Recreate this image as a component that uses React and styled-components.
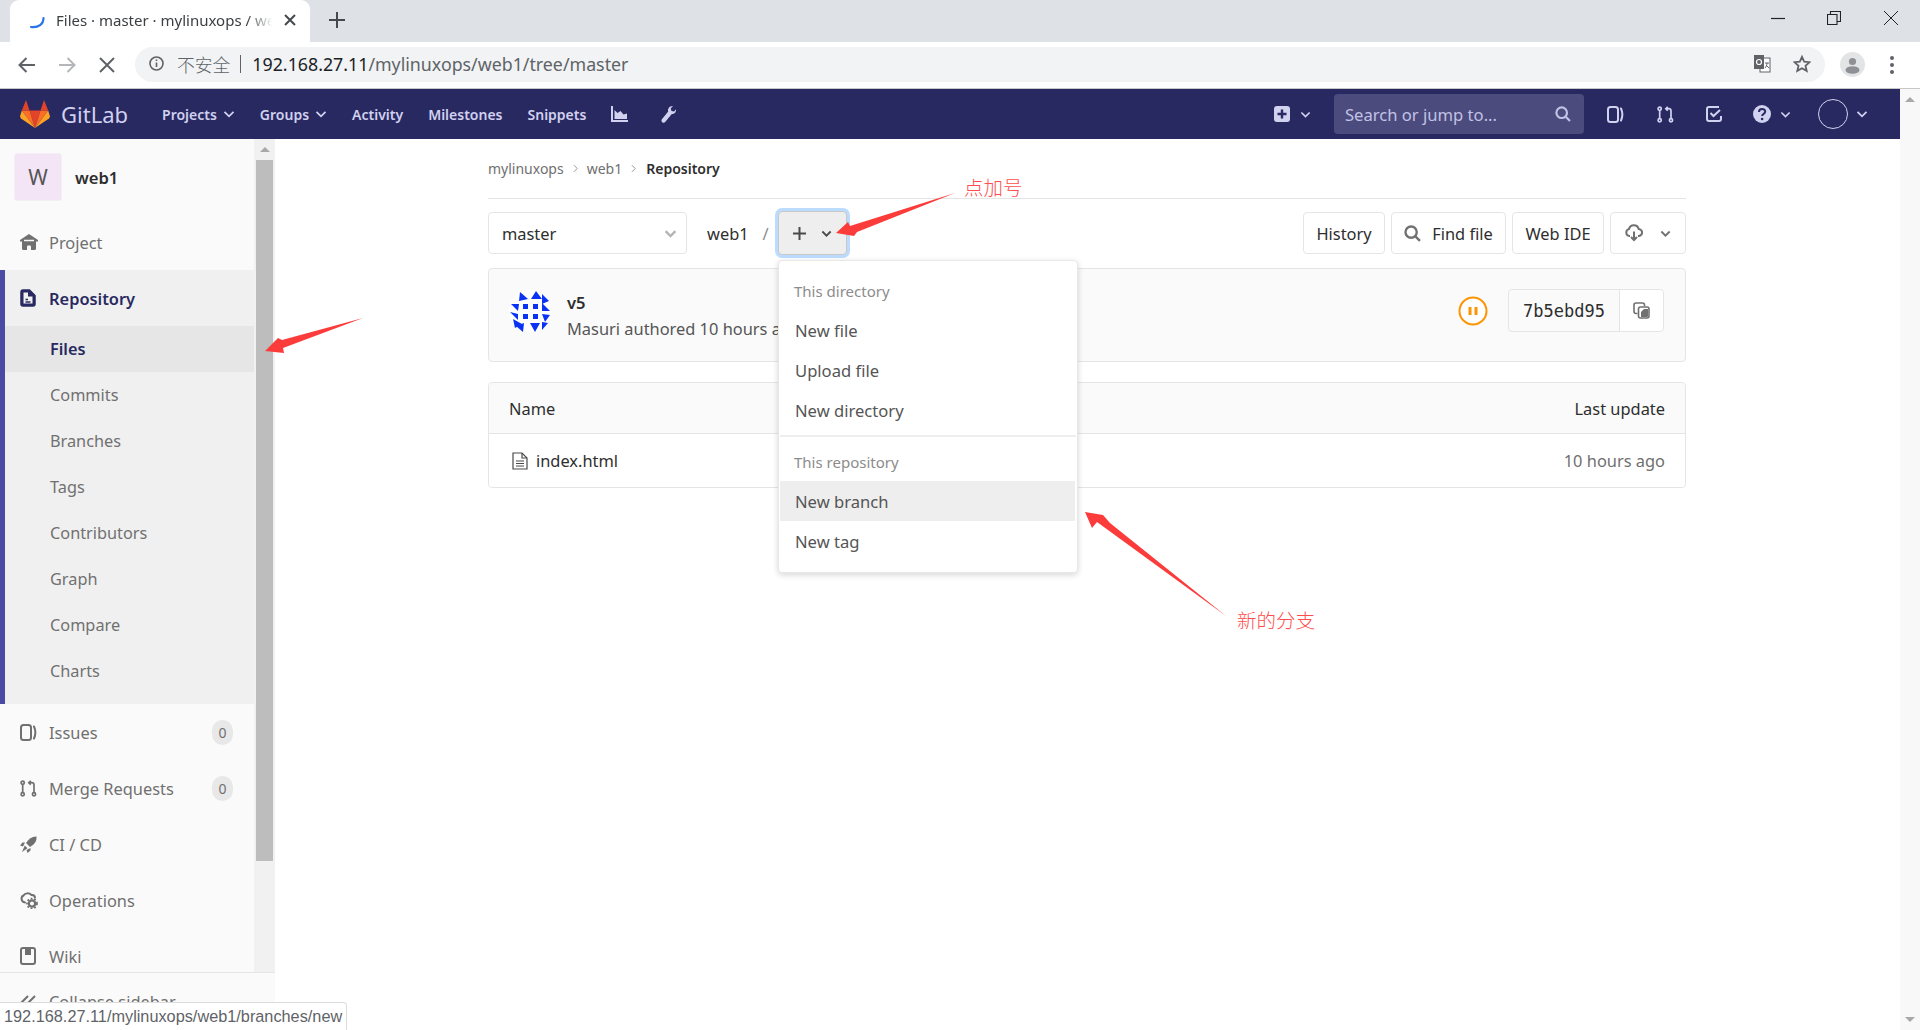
import React from 'react';
import styled, { createGlobalStyle } from 'styled-components';

const FONT = `"Noto Sans", "Noto Sans CJK SC", sans-serif`;

//GLOBAL
const GlobalStyle = createGlobalStyle`
    html, body { margin: 0; padding: 0; background: #fff; overflow: hidden; }
    body { font-family: ${FONT}; font-size: 16px; color: #2e2e2e; }
    * { box-sizing: border-box; }
`
const Page = styled.div`
    position: relative;
    width: 1920px;
    height: 1030px;
    overflow: hidden;
    display: flex;
    flex-direction: column;
`

//BROWSER CHROME
const TabStrip = styled.div`
    height: 42px;
    flex: none;
    background: #dee1e6;
    display: flex;
    align-items: flex-end;
    padding-left: 10px;
`
const Tab = styled.div`
    width: 300px;
    height: 42px;
    background: #fff;
    border-radius: 9px 9px 0 0;
    display: flex;
    align-items: center;
    padding: 0 14px 2px 19px;
    gap: 11px;
`
const TabTitle = styled.span`
    flex: 1;
    font-size: 15px;
    color: #3c4043;
    white-space: nowrap;
    overflow: hidden;
    -webkit-mask-image: linear-gradient(90deg, #000 88%, transparent 100%);
    mask-image: linear-gradient(90deg, #000 88%, transparent 100%);
`
const NewTab = styled.div`
    margin-left: 19px;
    height: 42px;
    display: flex;
    align-items: center;
    padding-bottom: 2px;
    color: #45494d;
`
const WindowButtons = styled.div`
    margin-left: auto;
    height: 42px;
    display: flex;
    align-items: center;
    padding: 0 21px 6px 0;
    gap: 42px;
    color: #222;
`
const Toolbar = styled.div`
    height: 47px;
    flex: none;
    background: #fff;
    border-bottom: 1px solid #c8c8c8;
    display: flex;
    align-items: center;
    padding: 0 18px 1px 17px;
`
const ToolIcon = styled.div`
    width: ${(p) => p.$w || 40}px;
    margin-left: ${(p) => p.$ml || 0}px;
    display: flex;
    justify-content: center;
    color: ${(p) => p.$color || '#5f6368'};
`
const AddressBar = styled.div`
    margin-left: 18px;
    width: 1690px;
    height: 35px;
    border-radius: 18px;
    background: #f1f3f4;
    display: flex;
    align-items: center;
    padding: 0 14px 2px 14px;
    font-size: 17.8px;
`
const Insecure = styled.span`
    margin-left: 13px;
    font-size: 17.8px;
    color: #5f6368;
    font-family: "Noto Sans CJK SC", sans-serif;
    font-weight: 300;
`
const AddressSep = styled.span`
    width: 1px;
    height: 18px;
    background: #5f6368;
    margin: 0 11px 0 10px;
`
const Host = styled.span`
    color: #202124;
`
const UrlPath = styled.span`
    color: #5f6368;
`
const AddressIcons = styled.div`
    margin-left: auto;
    display: flex;
    align-items: center;
    gap: 22px;
`

//GITLAB NAV
const Nav = styled.div`
    height: 50px;
    flex: none;
    background: #292961;
    display: flex;
    align-items: center;
    padding: 0 24px 0 20px;
    margin-right: 20px;
    color: #d1d1f0;
`
const Brand = styled.div`
    display: flex;
    align-items: center;
    gap: 11px;
    margin-right: 34px;
    font-size: 22px;
    color: #d1d1f0;
    line-height: 1;
`
const NavMenu = styled.div`
    display: flex;
    align-items: center;
    gap: 25px;
`
const NavLink = styled.div`
    display: flex;
    align-items: center;
    gap: 6px;
    margin-left: ${(p) => p.$ml || 0}px;
    font-size: 14px;
    font-weight: 600;
    white-space: nowrap;
`
const NavRight = styled.div`
    margin-left: auto;
    display: flex;
    align-items: center;
`
const NavCell = styled.div`
    width: ${(p) => p.$w}px;
    margin-left: ${(p) => p.$ml || 0}px;
    display: flex;
    align-items: center;
    justify-content: center;
    gap: ${(p) => p.$gap || 0}px;
`
const SearchBox = styled.div`
    width: 250px;
    height: 40px;
    margin: 0 11px 0 22px;
    background: #4b4b7d;
    border-radius: 4px;
    display: flex;
    align-items: center;
    justify-content: space-between;
    padding: 0 13px 0 11px;
    font-size: 16.6px;
    color: #c2c2e6;
`
const AvatarRing = styled.div`
    width: 30px;
    height: 30px;
    border-radius: 50%;
    border: 1px solid #d1d1f0;
`

//PAGE BODY
const Body = styled.div`
    flex: 1;
    min-height: 0;
    display: flex;
`
const Sidebar = styled.aside`
    width: 275px;
    flex: none;
    background: #fafafa;
    display: flex;
    flex-direction: column;
`
const SidebarScroll = styled.div`
    height: 833px;
    flex: none;
    display: flex;
    overflow: hidden;
`
const SidebarMenu = styled.div`
    width: 254px;
    flex: none;
`
const ContextHeader = styled.div`
    height: 75px;
    display: flex;
    align-items: flex-start;
    padding: 14px 0 0 14px;
    gap: 13px;
`
const ProjectAvatar = styled.div`
    width: 48px;
    height: 48px;
    border-radius: 3px;
    background: #f3e5f5;
    border: 1px solid #f3eff5;
    display: flex;
    align-items: center;
    justify-content: center;
    font-size: 21px;
    color: #555;
`
const ProjectName = styled.div`
    height: 48px;
    line-height: 49px;
    font-size: 16.6px;
    font-weight: 600;
    color: #2e2e2e;
`
const MenuItem = styled.div`
    height: 56px;
    display: flex;
    align-items: center;
    padding: 0 21px 0 20px;
    font-size: 16.4px;
    color: ${(p) => (p.$active ? '#292961' : '#707070')};
    font-weight: ${(p) => (p.$active ? 600 : 400)};
`
const ItemIcon = styled.span`
    width: 29px;
    flex: none;
    display: flex;
    align-items: center;
`
const ActiveGroup = styled.div`
    background: #f0f0f0;
    border-left: 5px solid #4b4ba3;
    padding-bottom: 10px;
    ${MenuItem} { padding-left: 15px; }
`
const SubItem = styled.div`
    height: 46px;
    display: flex;
    align-items: center;
    padding-left: 45px;
    font-size: 16.3px;
    color: ${(p) => (p.$active ? '#292961' : '#707070')};
    font-weight: ${(p) => (p.$active ? 600 : 400)};
    background: ${(p) => (p.$active ? '#e6e6e6' : 'transparent')};
`
const Badge = styled.span`
    margin-left: auto;
    width: 21px;
    height: 25px;
    border-radius: 11px;
    background: #e8e8e8;
    display: flex;
    align-items: center;
    justify-content: center;
    font-size: 14px;
    color: #707070;
`
const ScrollTrack = styled.div`
    width: 21px;
    flex: none;
    background: #f1f1f1;
    display: flex;
    flex-direction: column;
    align-items: center;
    padding-top: 8px;
`
const ScrollThumb = styled.div`
    width: 17px;
    height: 701px;
    margin-top: 8px;
    background: #bdbdbd;
`
const ArrowUp = styled.div`
    width: 0;
    height: 0;
    border-left: 5px solid transparent;
    border-right: 5px solid transparent;
    border-bottom: 5px solid ${(p) => p.$color || '#a8a8a8'};
`
const ArrowDown = styled(ArrowUp)`
    border-bottom: 0;
    border-top: 5px solid ${(p) => p.$color || '#a8a8a8'};
`
const CollapseRow = styled.div`
    flex: 1;
    border-top: 1px solid #e5e5e5;
    display: flex;
    align-items: center;
    padding: 0 0 0 20px;
    font-size: 16.4px;
    color: #707070;
`
const Main = styled.main`
    flex: 1;
    min-width: 0;
    padding-right: 1px;
`
const Content = styled.div`
    width: 1198px;
    margin: 0 auto;
`
const Breadcrumbs = styled.div`
    height: 60px;
    border-bottom: 1px solid #e5e5e5;
    display: flex;
    align-items: center;
    gap: 7px;
    font-size: 14px;
    color: #707070;
    padding-bottom: 1px;
`
const CrumbSep = styled.span`
    display: flex;
    transform: rotate(-90deg);
`
const CrumbCurrent = styled.span`
    margin-left: 1px;
    color: #2e2e2e;
    font-weight: 600;
`
const TreeBar = styled.div`
    display: flex;
    align-items: center;
    margin-top: 13px;
    height: 42px;
`
const BranchSelect = styled.div`
    width: 199px;
    height: 42px;
    border: 1px solid #e5e5e5;
    border-radius: 4px;
    display: flex;
    align-items: center;
    justify-content: space-between;
    padding: 0 9px 0 13px;
    font-size: 16.4px;
    color: #2e2e2e;
`
const PathPart = styled.span`
    margin-left: 20px;
    font-size: 16.4px;
    color: #2e2e2e;
`
const PathSlash = styled.span`
    margin-left: 14px;
    font-size: 16.4px;
    color: #8c8c8c;
`
const AddButton = styled.div`
    margin-left: 9px;
    width: 69px;
    height: 44px;
    border-radius: 4px;
    background: #eee;
    border: 1px solid #c8c8c8;
    box-shadow: 0 0 0 3px #bcdcff;
    display: flex;
    align-items: center;
    justify-content: center;
    gap: 15px;
    color: #4a4a4a;
`
const TreeActions = styled.div`
    margin-left: auto;
    display: flex;
    gap: 6px;
`
const ActionButton = styled.div`
    width: ${(p) => p.$w}px;
    height: 42px;
    border: 1px solid #e5e5e5;
    border-radius: 4px;
    background: #fff;
    display: flex;
    align-items: center;
    justify-content: center;
    gap: ${(p) => p.$gap || 11}px;
    font-size: 16.4px;
    color: #2e2e2e;
`
const ButtonIcon = styled.span`
    display: flex;
    color: #707070;
`
const CommitBox = styled.div`
    margin-top: 14px;
    height: 94px;
    border: 1px solid #e5e5e5;
    border-radius: 4px;
    background: #fafafa;
    display: flex;
    align-items: center;
    padding: 0 21px 9px 20px;
`
const CommitText = styled.div`
    margin-left: 16px;
    display: flex;
    flex-direction: column;
    gap: 1px;
    margin-top: 9px;
`
const CommitTitle = styled.div`
    font-size: 16.6px;
    font-weight: 600;
    color: #2e2e2e;
    line-height: 25px;
`
const CommitMeta = styled.div`
    font-size: 16.4px;
    color: #555;
    line-height: 25px;
`
const CommitSide = styled.div`
    margin-left: auto;
    display: flex;
    align-items: center;
    gap: 20px;
`
const ShaGroup = styled.div`
    height: 43px;
    display: flex;
    border: 1px solid #e5e5e5;
    border-radius: 4px;
`
const Sha = styled.div`
    width: 111px;
    display: flex;
    align-items: center;
    justify-content: center;
    font-family: "DejaVu Sans Mono", monospace;
    font-size: 17px;
    color: #2e2e2e;
    border-right: 1px solid #e5e5e5;
`
const CopyCell = styled.div`
    width: 43px;
    background: #fff;
    border-radius: 0 4px 4px 0;
    display: flex;
    align-items: center;
    justify-content: center;
    color: #707070;
`
const FileTable = styled.div`
    margin-top: 20px;
    border: 1px solid #e5e5e5;
    border-radius: 4px;
    height: 106px;
`
const TableRow = styled.div`
    height: ${(p) => p.$h}px;
    display: flex;
    align-items: center;
    justify-content: space-between;
    padding: 0 20px;
    font-size: 16.4px;
    color: #2e2e2e;
    background: ${(p) => (p.$head ? '#fafafa' : '#fff')};
    border-bottom: ${(p) => (p.$head ? '1px solid #e5e5e5' : '0')};
    border-radius: ${(p) => (p.$head ? '4px 4px 0 0' : '0 0 4px 4px')};
`
const FileName = styled.div`
    display: flex;
    align-items: center;
    gap: 8px;
    padding-left: 3px;
`
const Muted = styled.span`
    color: #707070;
`
const PageScroll = styled.div`
    width: 20px;
    flex: none;
    margin-top: -50px;
    background: #f8f8f8;
    display: flex;
    flex-direction: column;
    align-items: center;
    justify-content: space-between;
    padding: 8px 0;
`

//OVERLAYS
const Dropdown = styled.div`
    position: absolute;
    left: 778px;
    top: 260px;
    width: 300px;
    height: 313px;
    background: #fff;
    border: 1px solid #e8e8e8;
    border-radius: 4px;
    box-shadow: 0 2px 6px rgba(0, 0, 0, 0.16);
    padding: 11px 1px 0;
`
const DropLabel = styled.div`
    height: 38px;
    display: flex;
    align-items: center;
    padding-left: 14px;
    font-size: 15px;
    color: #8c8c8c;
`
const DropItem = styled.div`
    height: 40px;
    display: flex;
    align-items: center;
    padding-left: 15px;
    font-size: 16.6px;
    color: #555;
    background: ${(p) => (p.$hover ? '#eee' : 'transparent')};
    margin-right: 1px;
`
const DropDivider = styled.div`
    height: 2px;
    background: #eee;
    margin: 5px 0 6px;
`
const StatusBubble = styled.div`
    position: absolute;
    left: 0;
    bottom: 0;
    height: 28px;
    width: 347px;
    background: #fff;
    border: 1px solid #dcdcdc;
    border-left: 0;
    border-bottom: 0;
    border-radius: 0 4px 0 0;
    padding-left: 4px;
    display: flex;
    align-items: center;
    font-family: "Liberation Sans", Arial, sans-serif;
    font-size: 16.3px;
    color: #5f6368;
    white-space: nowrap;
`
const AnnotationLayer = styled.svg`
    position: absolute;
    left: 0;
    top: 0;
    pointer-events: none;
`
const Note = styled.span`
    position: absolute;
    left: ${(p) => p.$x}px;
    top: ${(p) => p.$y}px;
    font-family: "Noto Sans CJK SC", sans-serif;
    font-weight: 300;
    font-size: 19.5px;
    line-height: 26px;
    color: #ff4d4d;
`

//ICONS
const Chevron = ({ size = 12, color = 'currentColor', width = 1.8 }) => (
    <svg width={size} height={size} viewBox="0 0 12 12" fill="none" stroke={color} strokeWidth={width} style={{ flex: 'none' }}>
        <path d="M1.5 3.8 6 8.3l4.5-4.5" />
    </svg>
)
const Tanuki = () => (
    <svg width="30" height="28" viewBox="0 0 30 28">
        <polygon points="15,28 20.5,10.5 9.5,10.5" fill="#e24329" />
        <polygon points="15,28 9.5,10.5 1.8,10.5" fill="#fc6d26" />
        <polygon points="15,28 20.5,10.5 28.2,10.5" fill="#fc6d26" />
        <polygon points="1.8,10.5 0,16.5 1,18.5 15,28" fill="#fca326" />
        <polygon points="28.2,10.5 30,16.5 29,18.5 15,28" fill="#fca326" />
        <polygon points="1.8,10.5 9.5,10.5 6,0" fill="#e24329" />
        <polygon points="28.2,10.5 20.5,10.5 24,0" fill="#e24329" />
    </svg>
)
const IssuesIcon = ({ size = 17 }) => (
    <svg width={size} height={size} viewBox="0 0 17 17" fill="none" stroke="currentColor" strokeWidth="2" style={{ flex: 'none' }}>
        <rect x="1" y="1" width="10" height="15" rx="2.5" />
        <path d="M14 2.5c1.6 3.5 1.6 8.500 0 12" strokeLinecap="round" />
    </svg>
)
const MergeIcon = ({ size = 17 }) => (
    <svg width={size} height={size} viewBox="0 0 17 17" fill="none" stroke="currentColor" strokeWidth="1.7" style={{ flex: 'none' }}>
        <circle cx="2.700" cy="2.800" r="1.600" />
        <circle cx="2.700" cy="14.300" r="1.600" />
        <circle cx="14" cy="14.300" r="1.600" />
        <path d="M2.700 4.500v8M14 12.500V5c0-1.500-.8-2.300-2.300-2.300H9M10.800.8 8.800 2.700l2 1.900" />
    </svg>
)
const TodoIcon = () => (
    <svg width="16" height="16" viewBox="0 0 16 16" fill="none" stroke="currentColor" strokeWidth="2" style={{ flex: 'none' }}>
        <path d="M13 1H3a2 2 0 0 0-2 2v10a2 2 0 0 0 2 2h10a2 2 0 0 0 2-2v-3" />
        <path d="M4.500 7 7.500 10l6.500-6" />
    </svg>
)
const PlusBox = () => (
    <svg width="16" height="16" viewBox="0 0 16 16" style={{ flex: 'none' }}>
        <rect width="16" height="16" rx="3" fill="#d1d1f0" />
        <path d="M8 3.500v9M3.500 8h9" stroke="#292961" strokeWidth="2.400" />
    </svg>
)
const HelpIcon = () => (
    <svg width="18" height="18" viewBox="0 0 18 18" style={{ flex: 'none' }}>
        <circle cx="9" cy="9" r="9" fill="#d1d1f0" />
        <path d="M6 7c0-4 6.200-4 6.200-.3 0 2.200-3.100 2-3.100 4.200" fill="none" stroke="#292961" strokeWidth="2" />
        <circle cx="9.100" cy="14" r="1.300" fill="#292961" />
    </svg>
)
const SearchIcon = ({ size = 16, width = 2.200 }) => (
    <svg width={size} height={size} viewBox="0 0 16 16" fill="none" stroke="currentColor" strokeWidth={width} style={{ flex: 'none' }}>
        <circle cx="6.700" cy="6.700" r="5.300" />
        <path d="m10.700 10.700 4.300 4.300" />
    </svg>
)
const ChartIcon = () => (
    <svg width="17" height="16" viewBox="0 0 17 16" fill="currentColor" style={{ flex: 'none' }}>
        <path d="M0 0h2v14h15v2H0z" />
        <path d="M3.500 13V4l3 3 3-2 3 3.500 3.500-1V13z" />
    </svg>
)
const WrenchIcon = () => (
    <svg width="17" height="18" viewBox="0 0 17 18" fill="currentColor" style={{ flex: 'none' }}>
        <path d="M16 4.200c.4 2.600-1.500 5-4.200 4.900L5.200 17c-.8.9-2.100 1-3 .2-.9-.8-1-2-.3-2.900l6.300-7.700C7.300 3.800 9.600.7 13 1l-2.300 2.600.8 2.500 2.600.5z" />
    </svg>
)
const HomeIcon = () => (
    <svg width="18" height="16" viewBox="0 0 18 16" style={{ flex: 'none' }}>
        <path d="M9 0 18 6v1.600H16V14.500a1.500 1.500 0 0 1-1.500 1.500h-11A1.500 1.500 0 0 1 2 14.500V7.600H0V6z" fill="#707070" />
        <path d="M4 6.500h10" stroke="#fafafa" strokeWidth="1.500" fill="none" />
        <path d="M7 16v-3.500a1 1 0 0 1 1-1h2a1 1 0 0 1 1 1V16z" fill="#fafafa" />
    </svg>
)
const DocIcon = () => (
    <svg width="16" height="18" viewBox="0 0 16 18" style={{ flex: 'none' }}>
        <path d="M3 1h6.500L15 6.500V15a2 2 0 0 1-2 2H3a2 2 0 0 1-2-2V3a2 2 0 0 1 2-2z" fill="#292961" stroke="#292961" strokeWidth="1.500" />
        <path d="M3.500 3.500H8v4h4.500v7h-9z" fill="#f0f0f0" />
        <path d="M5.500 10.500H8M5.500 13h5" stroke="#292961" strokeWidth="1.500" />
    </svg>
)
const RocketIcon = () => (
    <svg width="17" height="17" viewBox="0 0 17 17" fill="#707070" style={{ flex: 'none' }}>
        <path d="M16.500.5c.3 4.500-1.500 7.500-6.500 10.500L6 7C9 2.500 12 .3 16.500.5z" />
        <path d="M5 6.500H2.500L0 9.500l3 1zM10.500 12v2.500l-3 2.500-1-3zM4.800 9.500l2.700 2.700L2 16z" />
    </svg>
)
const OpsIcon = () => (
    <svg width="18" height="17" viewBox="0 0 18 17" style={{ flex: 'none' }}>
        <path d="M5 10.500C1 10 .5 5 3.500 3.500 5 1 9 .5 11.500 3c1.800-.2 3.300 1 3.500 2.500" fill="none" stroke="#707070" strokeWidth="2" strokeLinecap="round" />
        <circle cx="12" cy="11.500" r="3.200" fill="none" stroke="#707070" strokeWidth="2.300" />
        <circle cx="12" cy="11.500" r="5" fill="none" stroke="#707070" strokeWidth="1.700" strokeDasharray="1.800 1.800" />
    </svg>
)
const WikiIcon = () => (
    <svg width="16" height="18" viewBox="0 0 16 18" fill="none" stroke="#707070" strokeWidth="2" style={{ flex: 'none' }}>
        <rect x="1" y="1" width="14" height="16" rx="2" />
        <path d="M5 1h6v7H5z" fill="#707070" stroke="none" />
    </svg>
)
const CollapseIcon = () => (
    <svg width="16" height="14" viewBox="0 0 16 14" fill="none" stroke="#707070" strokeWidth="2" style={{ flex: 'none' }}>
        <path d="M8 1 2 7l6 6M15 1 9 7l6 6" />
    </svg>
)
const FileIcon = () => (
    <svg width="16" height="18" viewBox="0 0 16 18" fill="none" stroke="#4a4a4a" strokeWidth="1.200" style={{ flex: 'none' }}>
        <path d="M1 1h9l5 5v11H1z" />
        <path d="M10 1v5h5M4 9h8M4 11.500h8M4 14h8" />
    </svg>
)
const DownloadIcon = () => (
    <svg width="18" height="18" viewBox="0 0 18 18" fill="none" stroke="#707070" strokeWidth="2" style={{ flex: 'none' }}>
        <path d="M5 12H4.500A3.500 3.500 0 0 1 4 5.100 5 5 0 0 1 13.700 5 3.500 3.500 0 0 1 13.500 12H13" />
        <path d="M9 7.500V16M6 13l3 3 3-3" />
    </svg>
)
const CopyIcon = () => (
    <svg width="17" height="17" viewBox="0 0 17 17" style={{ flex: 'none' }}>
        <path d="M4.500 11.500H3a2 2 0 0 1-2-2V3a2 2 0 0 1 2-2h6.500a2 2 0 0 1 2 2v1" fill="none" stroke="#707070" strokeWidth="1.600" />
        <rect x="5.500" y="5" width="10.500" height="11" rx="2" fill="#fff" stroke="#707070" strokeWidth="1.600" />
        <path d="M11 7h4v7a1 1 0 0 1-1 1H8v-5z" fill="#707070" />
    </svg>
)
const PauseIcon = () => (
    <svg width="30" height="30" viewBox="0 0 30 30" style={{ flex: 'none' }}>
        <circle cx="15" cy="15" r="13.500" fill="#fff" stroke="#fc9403" strokeWidth="2" />
        <rect x="10.500" y="11" width="3" height="8" rx="0.500" fill="#fc9403" />
        <rect x="16.500" y="11" width="3" height="8" rx="0.500" fill="#fc9403" />
    </svg>
)
const Identicon = () => (
    <svg width="42" height="42" viewBox="0 0 42 42" style={{ flex: 'none' }}>
        <circle cx="21" cy="21" r="21" fill="#fff" />
        <g fill="#0a32f5">
            <rect x="14" y="14" width="5" height="5" />
            <rect x="24" y="14" width="5" height="5" />
            <rect x="14" y="24" width="5" height="5" />
            <rect x="24" y="24" width="5" height="5" />
            <polygon points="11,2 19,9 10,11" />
            <polygon points="22,9 27,1 33,9" />
            <polygon points="33,4 40,11 33,14" />
            <polygon points="33,13 41,21 33,21" />
            <polygon points="2,14 10,14 9,21" />
            <polygon points="1,22 9,24 9,30" />
            <polygon points="33,24 41,25 36,32" />
            <polygon points="4,29 13,34 6,38" />
            <polygon points="33,32 39,33 33,40" />
            <polygon points="15,33 14,42 7,36" />
            <polygon points="21,33 31,33 26,42" />
        </g>
    </svg>
)
const TranslateIcon = () => (
    <svg width="18" height="18" viewBox="0 0 18 18" style={{ flex: 'none' }}>
        <rect x="7" y="3" width="10" height="14" fill="#fff" stroke="#5f6368" />
        <path d="M1 0h10v14H1z" fill="#5f6368" />
        <circle cx="6" cy="7" r="2.500" fill="none" stroke="#fff" strokeWidth="1.200" />
        <path d="M12 8h4M14 8c0 2-1 4-2 5M13 10l3 3" stroke="#5f6368" fill="none" />
    </svg>
)

const repoLinks = ['Commits', 'Branches', 'Tags', 'Contributors', 'Graph', 'Compare', 'Charts'];

const App = () => (
    <Page>
        <GlobalStyle />
        <TabStrip>
            <Tab>
                <svg width="16" height="16" viewBox="0 0 16 16" fill="none" stroke="#2a73e8" strokeWidth="2.200" style={{ flex: 'none', marginTop: 5 }}>
                    <path d="M14.500 3c0 6-5 10-12.500 9" strokeLinecap="round" />
                </svg>
                <TabTitle>Files · master · mylinuxops / web1 · GitLab</TabTitle>
                <svg width="12" height="12" viewBox="0 0 12 12" fill="none" stroke="#45494d" strokeWidth="2" style={{ flex: 'none' }}>
                    <path d="m1 1 10 10M11 1 1 11" />
                </svg>
            </Tab>
            <NewTab>
                <svg width="16" height="16" viewBox="0 0 16 16" fill="none" stroke="currentColor" strokeWidth="2">
                    <path d="M8 0v16M0 8h16" />
                </svg>
            </NewTab>
            <WindowButtons>
                <svg width="14" height="14" viewBox="0 0 14 14" fill="none" stroke="currentColor" strokeWidth="1.200"><path d="M0 7.500h14" /></svg>
                <svg width="14" height="14" viewBox="0 0 14 14" fill="none" stroke="currentColor" strokeWidth="1.100"><path d="M.5 3.500h9.500v10H.5zM3.500 3.500v-3h10v10H10" /></svg>
                <svg width="16" height="16" viewBox="0 0 16 16" fill="none" stroke="currentColor" strokeWidth="1"><path d="m1 1 14 14M15 1 1 15" /></svg>
            </WindowButtons>
        </TabStrip>
        <Toolbar>
            <ToolIcon $w={20}>
                <svg width="18" height="16" viewBox="0 0 18 16" fill="none" stroke="currentColor" strokeWidth="2"><path d="M17 8H2M8.500 1 1.500 8l7 7" /></svg>
            </ToolIcon>
            <ToolIcon $w={60} $color="#b4b7ba">
                <svg width="18" height="16" viewBox="0 0 18 16" fill="none" stroke="currentColor" strokeWidth="2"><path d="M1 8h15M9.500 1l7 7-7 7" /></svg>
            </ToolIcon>
            <ToolIcon $w={20}>
                <svg width="16" height="16" viewBox="0 0 16 16" fill="none" stroke="currentColor" strokeWidth="2"><path d="m1 1 14 14M15 1 1 15" /></svg>
            </ToolIcon>
            <AddressBar>
                <svg width="15" height="15" viewBox="0 0 15 15" fill="none" stroke="#5f6368" strokeWidth="1.600" style={{ flex: 'none' }}>
                    <circle cx="7.500" cy="7.500" r="6.500" />
                    <path d="M7.500 6.500V11M7.500 3.500v1.600" />
                </svg>
                <Insecure>不安全</Insecure>
                <AddressSep />
                <Host>192.168.27.11</Host>
                <UrlPath>/mylinuxops/web1/tree/master</UrlPath>
                <AddressIcons>
                    <TranslateIcon />
                    <svg width="18" height="18" viewBox="0 0 18 18" fill="none" stroke="#5f6368" strokeWidth="1.800" style={{ flex: 'none' }}>
                        <path d="m9 1.800 2.200 4.900 5.300.5-4 3.500 1.200 5.200L9 13.200l-4.700 2.700 1.200-5.200-4-3.500 5.300-.5z" />
                    </svg>
                </AddressIcons>
            </AddressBar>
            <ToolIcon $w={40} $ml={7}>
                <svg width="25" height="25" viewBox="0 0 25 25">
                    <circle cx="12.500" cy="12.500" r="12.500" fill="#e3e4e6" />
                    <circle cx="12.500" cy="9.500" r="3.600" fill="#8d9094" />
                    <ellipse cx="12.500" cy="18" rx="7" ry="3.800" fill="#8d9094" />
                </svg>
            </ToolIcon>
            <ToolIcon $w={4} $ml={18} $color="#5f6368">
                <svg width="4" height="18" viewBox="0 0 4 18" fill="currentColor"><circle cx="2" cy="2" r="2" /><circle cx="2" cy="9" r="2" /><circle cx="2" cy="16" r="2" /></svg>
            </ToolIcon>
        </Toolbar>
        <Nav>
            <Brand><Tanuki />GitLab</Brand>
            <NavMenu>
                <NavLink>Projects <Chevron /></NavLink>
                <NavLink>Groups <Chevron /></NavLink>
                <NavLink>Activity</NavLink>
                <NavLink>Milestones</NavLink>
                <NavLink>Snippets</NavLink>
                <NavLink><ChartIcon /></NavLink>
                <NavLink $ml={7}><WrenchIcon /></NavLink>
            </NavMenu>
            <NavRight>
                <NavCell $w={40} $gap={10}><PlusBox /><Chevron size={11} /></NavCell>
                <SearchBox>Search or jump to...<SearchIcon /></SearchBox>
                <NavCell $w={40}><IssuesIcon /></NavCell>
                <NavCell $w={60}><MergeIcon /></NavCell>
                <NavCell $w={38}><TodoIcon /></NavCell>
                <NavCell $w={62} $ml={8} $gap={9}><HelpIcon /><Chevron size={11} /></NavCell>
                <NavCell $w={66} $ml={7} $gap={8}><AvatarRing /><Chevron size={12} /></NavCell>
            </NavRight>
        </Nav>
        <Body>
            <Sidebar>
                <SidebarScroll>
                    <SidebarMenu>
                        <ContextHeader>
                            <ProjectAvatar>W</ProjectAvatar>
                            <ProjectName>web1</ProjectName>
                        </ContextHeader>
                        <MenuItem><ItemIcon><HomeIcon /></ItemIcon>Project</MenuItem>
                        <ActiveGroup>
                            <MenuItem $active><ItemIcon><DocIcon /></ItemIcon>Repository</MenuItem>
                            <SubItem $active>Files</SubItem>
                            {repoLinks.map((link) => <SubItem key={link}>{link}</SubItem>)}
                        </ActiveGroup>
                        <MenuItem><ItemIcon><IssuesIcon /></ItemIcon>Issues<Badge>0</Badge></MenuItem>
                        <MenuItem><ItemIcon><MergeIcon /></ItemIcon>Merge Requests<Badge>0</Badge></MenuItem>
                        <MenuItem><ItemIcon><RocketIcon /></ItemIcon>CI / CD</MenuItem>
                        <MenuItem><ItemIcon><OpsIcon /></ItemIcon>Operations</MenuItem>
                        <MenuItem><ItemIcon><WikiIcon /></ItemIcon>Wiki</MenuItem>
                    </SidebarMenu>
                    <ScrollTrack>
                        <ArrowUp />
                        <ScrollThumb />
                    </ScrollTrack>
                </SidebarScroll>
                <CollapseRow><ItemIcon><CollapseIcon /></ItemIcon>Collapse sidebar</CollapseRow>
            </Sidebar>
            <Main>
                <Content>
                    <Breadcrumbs>
                        mylinuxops
                        <CrumbSep><Chevron size={9} color="#8c8c8c" width={1.200} /></CrumbSep>
                        web1
                        <CrumbSep><Chevron size={9} color="#8c8c8c" width={1.200} /></CrumbSep>
                        <CrumbCurrent>Repository</CrumbCurrent>
                    </Breadcrumbs>
                    <TreeBar>
                        <BranchSelect>master<Chevron size={13} color="#b5b5b5" width={2.200} /></BranchSelect>
                        <PathPart>web1</PathPart>
                        <PathSlash>/</PathSlash>
                        <AddButton>
                            <svg width="13" height="13" viewBox="0 0 13 13" fill="none" stroke="currentColor" strokeWidth="2"><path d="M6.500 0v13M0 6.500h13" /></svg>
                            <Chevron size={11} width={2} />
                        </AddButton>
                        <TreeActions>
                            <ActionButton $w={82}>History</ActionButton>
                            <ActionButton $w={115}>
                                <ButtonIcon><SearchIcon size={17} /></ButtonIcon>
                                Find file
                            </ActionButton>
                            <ActionButton $w={92}>Web IDE</ActionButton>
                            <ActionButton $w={76} $gap={17}><DownloadIcon /><Chevron size={11} color="#707070" width={2} /></ActionButton>
                        </TreeActions>
                    </TreeBar>
                    <CommitBox>
                        <Identicon />
                        <CommitText>
                            <CommitTitle>v5</CommitTitle>
                            <CommitMeta>Masuri authored 10 hours ago</CommitMeta>
                        </CommitText>
                        <CommitSide>
                            <PauseIcon />
                            <ShaGroup>
                                <Sha>7b5ebd95</Sha>
                                <CopyCell><CopyIcon /></CopyCell>
                            </ShaGroup>
                        </CommitSide>
                    </CommitBox>
                    <FileTable>
                        <TableRow $head $h={51}>
                            <span>Name</span>
                            <span>Last update</span>
                        </TableRow>
                        <TableRow $h={53}>
                            <FileName><FileIcon />index.html</FileName>
                            <Muted>10 hours ago</Muted>
                        </TableRow>
                    </FileTable>
                </Content>
            </Main>
            <PageScroll>
                <ArrowUp />
                <ArrowDown />
            </PageScroll>
        </Body>

        <Dropdown>
            <DropLabel>This directory</DropLabel>
            <DropItem>New file</DropItem>
            <DropItem>Upload file</DropItem>
            <DropItem>New directory</DropItem>
            <DropDivider />
            <DropLabel>This repository</DropLabel>
            <DropItem $hover>New branch</DropItem>
            <DropItem>New tag</DropItem>
        </Dropdown>

        <StatusBubble>192.168.27.11/mylinuxops/web1/branches/new</StatusBubble>

        <AnnotationLayer width="1920" height="1030" viewBox="0 0 1920 1030">
            <g fill="#fc3b3b">
                <polygon points="836,233 848,222 850,226 955,193 857,232 854,236" />
                <polygon points="265,351 278,338 282,340 363,318 283,348 284,353" />
                <polygon points="1085,512 1103,515 1110,523 1226,616 1097,522 1092,528" />
            </g>
        </AnnotationLayer>
        <Note $x={964} $y={174}>点加号</Note>
        <Note $x={1237} $y={607}>新的分支</Note>
    </Page>
)

export default App;
